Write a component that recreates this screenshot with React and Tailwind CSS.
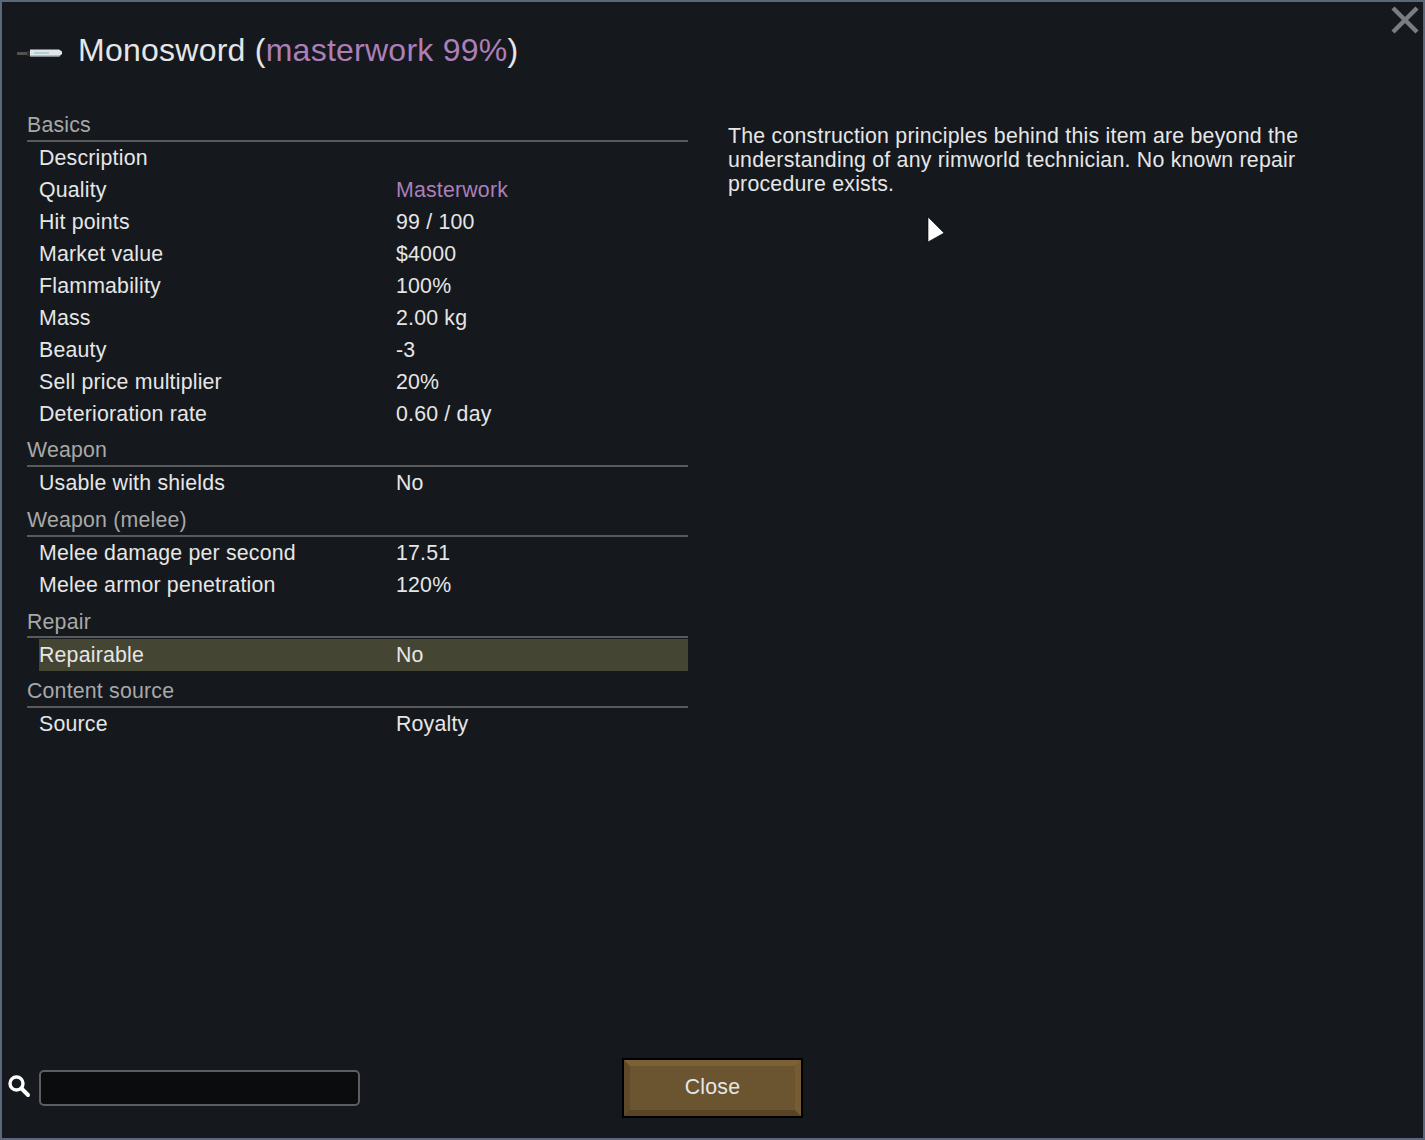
const sections = [
  { title: "Basics", head: "h-[38px] pb-[2px]", rows: [
    ["Description", ""],
    ["Quality", "Masterwork", "q"],
    ["Hit points", "99 / 100"],
    ["Market value", "$4000"],
    ["Flammability", "100%"],
    ["Mass", "2.00 kg"],
    ["Beauty", "-3"],
    ["Sell price multiplier", "20%"],
    ["Deterioration rate", "0.60 / day"],
  ]},
  { title: "Weapon", head: "h-[37px] pb-[2px]", rows: [["Usable with shields", "No"]] },
  { title: "Weapon (melee)", head: "h-[38px] pb-[2px]", rows: [["Melee damage per second", "17.51"], ["Melee armor penetration", "120%"]] },
  { title: "Repair", head: "h-[37px] mb-[1px] pb-[1px]", rows: [["Repairable", "No", "h"]] },
  { title: "Content source", head: "h-[37px] pb-[2px]", rows: [["Source", "Royalty"]] },
];

function Sword() {
  return (
    <svg width="48" height="12" viewBox="0 0 48 12" className="mt-[6px] shrink-0">
      <rect x="1" y="5" width="12" height="3" fill="#55524e" />
      <rect x="11" y="4" width="3" height="5" fill="#2e2e2e" />
      <path d="M14 2.5 H43 L46 4.5 V7 L43 9.5 H14 Z" fill="#dfe6ea" />
      <rect x="14" y="8.5" width="30" height="1" fill="#8e9498" />
      <rect x="18" y="5.5" width="15" height="1" fill="#8fb4c6" />
    </svg>
  );
}

export default function App() {
  return (
    <div className="relative flex h-[1140px] w-[1425px] flex-col border-2 border-[#5b677a] bg-[#15191e] font-['Liberation_Sans',Arial,sans-serif] tracking-[0.2px] text-[#e6e6e6]">
      <svg width="28" height="28" viewBox="0 0 28 28" className="absolute right-[4px] top-[4px]">
        <path d="M2 2 L26 26 M26 2 L2 26" stroke="#787d82" strokeWidth="4.5" />
      </svg>
      <svg width="20" height="30" viewBox="0 0 20 30" className="absolute left-[925px] top-[214px]">
        <path d="M1 1 L17 17 L1 26 Z" fill="#ffffff" stroke="#000000" strokeWidth="0.6" />
      </svg>

      <div className="flex h-[102px] shrink-0 items-start pl-[14px] pt-[29px]">
        <div className="flex items-center gap-[14px]">
          <Sword />
          <div className="text-[32px] leading-[38px] tracking-[0.25px]">
            Monosword (<span className="text-[#ac7fb9]">masterwork 99%</span>)
          </div>
        </div>
      </div>

      <div className="flex flex-1 items-start">
        <div className="ml-[25px] w-[661px]">
          {sections.map((s) => (
            <section key={s.title}>
              <div className={`flex items-end border-b-2 border-[#5a5a5a] text-[21.3px] leading-[26px] text-[#a8a8a8] ${s.head}`}>
                {s.title}
              </div>
              {s.rows.map(([label, value, kind]) => (
                <div key={label} className={`ml-[12px] flex h-[32px] items-center pt-[2px] text-[21.3px] ${kind === "h" ? "bg-[#454533]" : ""}`}>
                  <div className="w-[357px]">{label}</div>
                  <div className={kind === "q" ? "text-[#ac7fb9]" : ""}>{value}</div>
                </div>
              ))}
            </section>
          ))}
        </div>
        <p className="ml-[40px] mt-[20px] w-[600px] text-[21.3px] leading-[24px] tracking-[0.235px]">
          The construction principles behind this item are beyond the understanding of any rimworld technician. No known repair procedure exists.
        </p>
      </div>

      <div className="flex h-[80px] shrink-0 items-start pl-[5px]">
        <svg width="24" height="24" viewBox="0 0 24 24" className="mt-[16px] shrink-0">
          <circle cx="9.5" cy="9.5" r="6.5" fill="none" stroke="#ffffff" strokeWidth="3.4" />
          <path d="M14.5 14.5 L21 21" stroke="#ffffff" strokeWidth="4" strokeLinecap="round" />
        </svg>
        <div className="ml-[8px] mt-[12px] h-[36px] w-[321px] rounded-[5px] border-2 border-[#5e5e5e] bg-[#0b0c0e]" />
        <button className="ml-[262px] h-[60px] w-[181px] border-2 border-black">
          <div className="flex h-full items-center justify-center border-[6px] border-b-[#574427] border-l-[#5e4a2b] border-r-[#765c34] border-t-[#7c6136] bg-[#6b5430] text-[21.3px] text-[#e6e6e6]">
            Close
          </div>
        </button>
      </div>
    </div>
  );
}
